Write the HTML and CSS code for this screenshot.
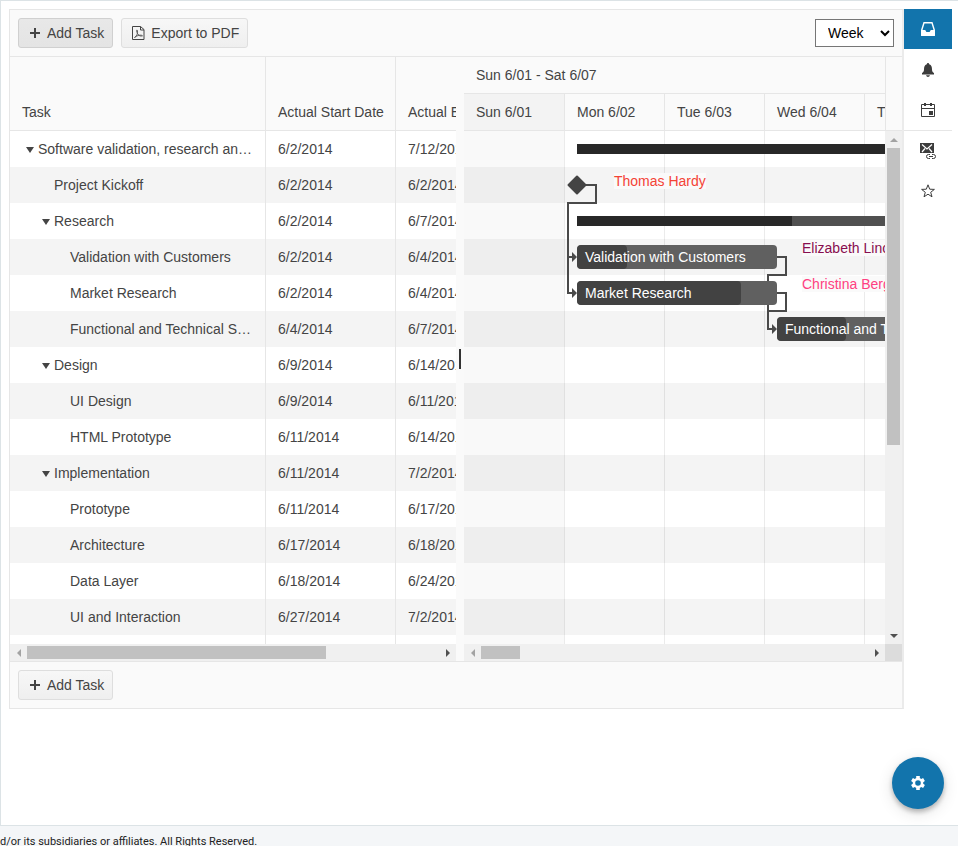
FILE: index.html
```html
<!DOCTYPE html>
<html lang="en">
<head>
<meta charset="utf-8">
<title>Gantt</title>
<link rel="stylesheet" href="styles.css">
</head>
<body>
<main class="workspace">
  <section class="gantt">
    <header class="toolbar toolbar-top">
      <button type="button" class="btn btn-active">
        <svg class="icon-plus" viewBox="0 0 12 12" width="12" height="12"><path d="M6 1v10M1 6h10"/></svg>
        Add Task
      </button>
      <button type="button" class="btn">
        <svg class="icon-pdf" viewBox="0 0 13 16" width="13" height="16"><path d="M.5 1.500h8l3.500 3v10H.5z"/><path d="M8.500 1.500v3.500h3.500"/><path class="thin" d="M2.500 12.500c2-1 3.500-4 3-7-1-1.500-1.500.5 0 3s3 3 5 2.300c-1-1.300-5-.8-8 1.700z"/></svg>
        Export to PDF
      </button>
      <select class="view-select" aria-label="View"><option>Week</option></select>
    </header>

    <div class="panes">
      <div class="tree-pane">
        <div class="pane-view">
          <table class="tree">
            <colgroup><col class="col-task"><col class="col-date"><col class="col-date"></colgroup>
            <thead><tr><th>Task</th><th>Actual Start Date</th><th>Actual End Date</th></tr></thead>
            <tbody>
              <tr><td class="l0 group">Software validation, research and implementation</td><td>6/2/2014</td><td>7/12/2014</td></tr>
              <tr><td class="l1">Project Kickoff</td><td>6/2/2014</td><td>6/2/2014</td></tr>
              <tr><td class="l1 group">Research</td><td>6/2/2014</td><td>6/7/2014</td></tr>
              <tr><td class="l2">Validation with Customers</td><td>6/2/2014</td><td>6/4/2014</td></tr>
              <tr><td class="l2">Market Research</td><td>6/2/2014</td><td>6/4/2014</td></tr>
              <tr><td class="l2">Functional and Technical Specification</td><td>6/4/2014</td><td>6/7/2014</td></tr>
              <tr><td class="l1 group">Design</td><td>6/9/2014</td><td>6/14/2014</td></tr>
              <tr><td class="l2">UI Design</td><td>6/9/2014</td><td>6/11/2014</td></tr>
              <tr><td class="l2">HTML Prototype</td><td>6/11/2014</td><td>6/14/2014</td></tr>
              <tr><td class="l1 group">Implementation</td><td>6/11/2014</td><td>7/2/2014</td></tr>
              <tr><td class="l2">Prototype</td><td>6/11/2014</td><td>6/17/2014</td></tr>
              <tr><td class="l2">Architecture</td><td>6/17/2014</td><td>6/18/2014</td></tr>
              <tr><td class="l2">Data Layer</td><td>6/18/2014</td><td>6/24/2014</td></tr>
              <tr><td class="l2">UI and Interaction</td><td>6/27/2014</td><td>7/2/2014</td></tr>
              <tr><td></td><td></td><td></td></tr>
            </tbody>
          </table>
        </div>
        <div class="scroll-x">
          <span class="arrow left off"></span><span class="track"><span class="thumb thumb-tree"></span></span><span class="arrow right"></span>
        </div>
      </div>

      <div class="splitter"><span class="grip"></span></div>

      <div class="time-pane">
        <div class="time-head">
          <div class="days-head">
            <div class="week">Sun 6/01 - Sat 6/07</div>
            <div class="days">
              <div class="day weekend">Sun 6/01</div><div class="day">Mon 6/02</div><div class="day">Tue 6/03</div><div class="day">Wed 6/04</div><div class="day">Thu 6/05</div>
            </div>
          </div>
          <div class="head-gap"></div>
        </div>
        <div class="time-body">
          <div class="canvas">
            <div class="days lines">
              <div class="day weekend"></div><div class="day"></div><div class="day"></div><div class="day"></div><div class="day"></div>
            </div>
            <svg class="links" width="600" height="513">
              <path class="wire" d="M122 54H132V72H104V162H109M104 126H109"/>
              <path class="wire" d="M313 126H322V144H304V198H309M313 162H322V180H304"/>
              <path class="head" d="M108 121v10l5-5zM108 157v10l5-5zM308 193v10l5-5z"/>
              <path class="milestone" d="M113 45.500l8.500 8.500-8.500 8.500-8.500-8.500z"/>
            </svg>
            <div class="summary s1"></div>
            <div class="summary s2"><span class="done"></span></div>
            <div class="task t1"><span class="done"></span><span class="name">Validation with Customers</span></div>
            <div class="task t2"><span class="done"></span><span class="name">Market Research</span></div>
            <div class="task t3"><span class="done"></span><span class="name">Functional and Technical Specification</span></div>
            <span class="person p1">Thomas Hardy</span>
            <span class="person p2">Elizabeth Lincoln</span>
            <span class="person p3">Christina Berglund</span>
          </div>
          <div class="scroll-y">
            <span class="arrow up off"></span><span class="track"><span class="thumb thumb-rows"></span></span><span class="arrow down"></span>
          </div>
        </div>
        <div class="scroll-row">
          <div class="scroll-x">
            <span class="arrow left off"></span><span class="track"><span class="thumb thumb-time"></span></span><span class="arrow right"></span>
          </div>
          <div class="corner"></div>
        </div>
      </div>
    </div>

    <footer class="toolbar toolbar-bottom">
      <button type="button" class="btn">
        <svg class="icon-plus" viewBox="0 0 12 12" width="12" height="12"><path d="M6 1v10M1 6h10"/></svg>
        Add Task
      </button>
    </footer>
  </section>

  <nav class="rail">
    <button type="button" class="rail-item current" aria-label="Inbox">
      <svg viewBox="0 0 16 16" width="16" height="16"><path fill="#fff" fill-rule="evenodd" d="M3.500 1h9L15 9v5.500q0 .5-.5.500h-13q-.5 0-.5-.5V9zM4.500 2.500L2.500 9h2.700l1.200 2h3.200l1.200-2h2.700l-2-6.500z"/></svg>
    </button>
    <button type="button" class="rail-item" aria-label="Notifications">
      <svg viewBox="0 0 16 16" width="16" height="16"><path fill="#3c3c3c" d="M8 1q1.200 0 1.200 1.200C11.500 3 12 5 12 7.500c0 2 .8 3 2 3.500v1.500H2V11c1.200-.5 2-1.500 2-3.500C4 5 4.500 3 6.800 2.200Q6.800 1 8 1zM6 13.200h4Q9.500 15 8 15T6 13.200z"/></svg>
    </button>
    <button type="button" class="rail-item" aria-label="Calendar">
      <svg viewBox="0 0 16 16" width="16" height="16"><path fill="none" stroke="#3c3c3c" d="M1.500 2.500h13v12h-13zM1.500 6.500h13"/><path fill="#3c3c3c" d="M4 1h2v3H4zM10 1h2v3h-2zM9 9h4v4H9z"/></svg>
    </button>
    <button type="button" class="rail-item divided" aria-label="Linked mail">
      <svg viewBox="0 0 16 18" width="16" height="18"><path fill="#3c3c3c" d="M0 1h14v10H0z"/><path fill="none" stroke="#fff" stroke-width="1.200" d="M2 2.500l5 4.500 5-4.500M2 10l3-3.500M12 10L9 6.500"/><rect x="5" y="11" width="11" height="7" fill="#fff"/><path fill="none" stroke="#3c3c3c" d="M10 12.500H8.500a2 2 0 0 0 0 4H10M12 12.500h1.500a2 2 0 0 1 0 4H12M9 14.500h4"/></svg>
    </button>
    <button type="button" class="rail-item" aria-label="Favorites">
      <svg viewBox="0 0 16 16" width="16" height="16"><path fill="none" stroke="#3c3c3c" d="M8 1.800l1.700 4.400 4.700.2-3.700 2.900 1.300 4.500L8 11.200l-4 2.600 1.300-4.500-3.700-2.900 4.700-.2z"/></svg>
    </button>
  </nav>
</main>
<footer class="legal">d/or its subsidiaries or affiliates. All Rights Reserved.</footer>
<button type="button" class="fab" aria-label="Settings">
  <svg viewBox="0 0 16 16" width="16" height="16"><path fill="#fff" fill-rule="evenodd" d="M6.200 1h3.600v2.100l1.400.8 1.900-1 1.800 3.100-1.700 1.200v1.600l1.700 1.200-1.800 3.100-1.900-1-1.400.8V15H6.200v-2.100l-1.400-.8-1.900 1L1.100 10l1.700-1.200V7.200L1.100 6l1.800-3.100 1.900 1 1.400-.8zM8 5.200a2.800 2.800 0 1 0 0 5.600 2.800 2.800 0 0 0 0-5.600z"/></svg>
</button>
</body>
</html>
```
FILE: styles.css
```css
* { box-sizing: border-box; }

body {
  margin: 0;
  min-height: 100vh;
  display: flex;
  flex-direction: column;
  overflow: hidden;
  background: #f4f6f8;
  color: #444;
  font: 14px/20px "Liberation Sans", Arial, sans-serif;
}

button, select { font: inherit; color: inherit; }

.workspace {
  flex: 1;
  display: flex;
  align-items: flex-start;
  padding: 8px 6px 0 8px;
  background: #fff;
  border: solid #dce3e6;
  border-width: 1px 0 1px 1px;
}

/* Gantt frame */
.gantt {
  flex: 1;
  min-width: 0;
  height: 700px;
  display: flex;
  flex-direction: column;
  background: #fafafa;
  border: 1px solid #e6e6e6;
  border-right: 2px solid #ebebeb;
}

.toolbar { display: flex; align-items: center; gap: 8px; padding: 8px; }
.toolbar-top { border-bottom: 1px solid #e6e6e6; }
.toolbar-bottom { border-top: 1px solid #e6e6e6; }

.btn {
  display: flex;
  align-items: center;
  gap: 6px;
  height: 30px;
  padding: 0 8px 0 10px;
  border: 1px solid #dedede;
  border-radius: 3px;
  background: linear-gradient(#f7f7f7, #efefef);
}
.btn-active { border-color: #d0d0d0; background: linear-gradient(#e8e8e8, #e4e4e4); }
.icon-plus { fill: none; stroke: #444; stroke-width: 2; }
.icon-pdf { fill: none; stroke: #444; }
.icon-pdf .thin { stroke-width: 0.8; }

.view-select {
  width: 79px;
  height: 28px;
  margin-left: auto;
  padding: 0 0 0 8px;
  color: #000;
  background: #fff;
  border: 1px solid #767676;
  border-radius: 0;
}

/* Panes */
.panes { flex: 1; min-height: 0; display: flex; }
.tree-pane { width: 446px; display: flex; flex-direction: column; }
.pane-view { flex: 1; min-height: 0; overflow: hidden; }

.tree { width: 515px; table-layout: fixed; border-collapse: separate; border-spacing: 0; }
.col-task { width: 255px; }
.col-date { width: 130px; }
.tree th {
  height: 74px;
  padding: 0 12px 8px;
  text-align: left;
  vertical-align: bottom;
  font-weight: normal;
  white-space: nowrap;
  border-bottom: 1px solid #e6e6e6;
}
.tree td {
  height: 36px;
  padding: 0 12px;
  overflow: hidden;
  white-space: nowrap;
  text-overflow: ellipsis;
  background: #fff;
}
.tree th + th, .tree td + td { border-left: 1px solid #e6e6e6; }
.tree tr:nth-child(even) td { background: #f4f4f4; }
.tree .l0 { padding-left: 28px; }
.tree .l1 { padding-left: 44px; }
.tree .l2 { padding-left: 60px; }
.tree .group::before {
  content: "";
  display: inline-block;
  margin: 0 4px 1px -12px;
  border: solid transparent;
  border-width: 6px 4px 0;
  border-top-color: #444;
}

.splitter { width: 8px; display: flex; align-items: center; justify-content: center; background: #fafafa; }
.grip { width: 2px; height: 20px; background: #333; }

/* Timeline */
.time-pane { flex: 1; min-width: 0; display: flex; flex-direction: column; }
.time-head { display: flex; height: 74px; border-bottom: 1px solid #e6e6e6; }
.days-head { flex: 1; min-width: 0; overflow: hidden; }
.head-gap { width: 17px; border-left: 1px solid #e6e6e6; }
.week { height: 37px; padding: 8px 12px; border-bottom: 1px solid #e6e6e6; }
.days { display: flex; width: 500px; }
.day { width: 100px; height: 36px; padding: 8px 12px; }
.day + .day { border-left: 1px solid #e6e6e6; }
.weekend { background: #f3f3f3; }

.time-body { flex: 1; min-height: 0; display: flex; }
.canvas {
  flex: 1;
  min-width: 0;
  position: relative;
  overflow: hidden;
  background: repeating-linear-gradient(#fff 0 36px, #f4f4f4 36px 72px);
}
.lines, .lines .day { height: 100%; }
.lines .day + .day { border-color: rgba(0, 0, 0, 0.08); }
.lines .weekend { background: rgba(0, 0, 0, 0.025); }

.links { position: absolute; left: 0; top: 0; }
.wire { fill: none; stroke: #4a4a4a; stroke-width: 2; }
.head { fill: #4a4a4a; }
.milestone { fill: #444; stroke: #444; stroke-width: 2; stroke-linejoin: round; }

.summary { position: absolute; left: 113px; width: 500px; height: 10px; background: #505050; }
.summary .done { display: block; width: 215px; height: 100%; background: #282828; }
.s1 { top: 13px; background: #282828; }
.s2 { top: 85px; }

.task {
  position: absolute;
  width: 200px;
  height: 24px;
  overflow: hidden;
  border-radius: 4px;
  background: #606060;
  color: #fff;
  white-space: nowrap;
}
.task .done { position: absolute; left: 0; top: 0; height: 100%; border-radius: 4px; background: #424242; }
.task .name { position: relative; display: block; padding: 2px 8px; }
.t1 { left: 113px; top: 114px; }
.t1 .done { width: 50px; }
.t2 { left: 113px; top: 150px; }
.t2 .done { width: 164px; }
.t3 { left: 313px; top: 186px; width: 300px; }
.t3 .done { width: 69px; }

.person { position: absolute; line-height: 16px; white-space: nowrap; background: #fafafa; }
.p1 { left: 150px; top: 42px; color: #f44336; }
.p2 { left: 338px; top: 109px; color: #880e4f; }
.p3 { left: 338px; top: 145px; color: #ff4081; }

/* Scroll bars */
.scroll-x, .scroll-y { display: flex; align-items: center; background: #f0f0f0; }
.scroll-x { height: 17px; }
.scroll-y { width: 17px; flex-direction: column; }
.scroll-row { display: flex; }
.scroll-row .scroll-x { flex: 1; }
.corner { width: 17px; background: #dcdcdc; }
.track { flex: 1; display: block; }
.thumb { display: block; background: #c1c1c1; }
.scroll-x .thumb { height: 13px; }
.scroll-y .thumb { width: 13px; }
.thumb-tree { width: 299px; }
.thumb-time { width: 39px; }
.thumb-rows { height: 297px; }
.arrow { width: 17px; height: 17px; display: flex; align-items: center; justify-content: center; color: #505050; }
.arrow.off { color: #a3a3a3; }
.arrow::before { content: ""; border: 4px solid transparent; }
.arrow.left::before { border-left-width: 0; border-right-color: currentColor; }
.arrow.right::before { border-right-width: 0; border-left-color: currentColor; }
.arrow.up::before { border-top-width: 0; border-bottom-color: currentColor; }
.arrow.down::before { border-bottom-width: 0; border-top-color: currentColor; }

/* Side rail */
.rail { width: 48px; display: flex; flex-direction: column; }
.rail-item {
  height: 40px;
  padding: 0;
  display: flex;
  align-items: center;
  justify-content: center;
  border: 0;
  background: #fff;
}
.rail-item.current { background: #1274ac; }
.rail-item.divided { height: 41px; border-top: 1px solid #e6e6e6; }
.rail-item:nth-child(2) { height: 41px; }

.legal {
  height: 20px;
  padding-top: 6px;
  overflow: hidden;
  color: #222;
  font: 11px/20px Roboto, sans-serif;
  white-space: nowrap;
}

.fab {
  position: fixed;
  right: 14px;
  bottom: 37px;
  width: 52px;
  height: 52px;
  padding: 0;
  display: flex;
  align-items: center;
  justify-content: center;
  border: 0;
  border-radius: 50%;
  background: #1274ac;
  box-shadow: 0 3px 5px rgba(0, 0, 0, 0.25), 0 4px 16px rgba(0, 0, 0, 0.12);
}
```
